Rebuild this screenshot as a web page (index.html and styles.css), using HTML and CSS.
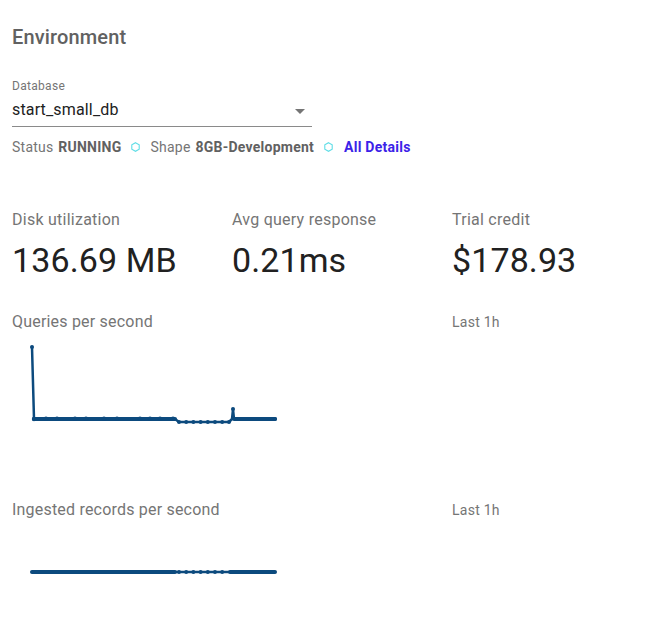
FILE: index.html
```html
<!DOCTYPE html>
<html>
<head>
<meta charset="utf-8">
<link rel="stylesheet" href="styles.css">
</head>
<body>
<main class="page">
  <h1 class="title">Environment</h1>

  <div class="field">
    <div class="field-label">Database</div>
    <div class="select">
      <span class="select-value">start_small_db</span>
      <svg class="select-arrow" width="10" height="5" viewBox="0 0 10 5"><path d="M0 0 L10 0 L5 5 Z" fill="#757575"/></svg>
    </div>
  </div>

  <div class="status">
    <span>Status <b>RUNNING</b></span>
    <svg class="hex" width="9" height="10" viewBox="0 0 9 10"><path d="M4.5 0.7 L8.2 2.85 L8.2 7.15 L4.5 9.3 L0.8 7.15 L0.8 2.85 Z" fill="none" stroke="#5fdde6" stroke-width="1.1"/></svg>
    <span>Shape <b>8GB-Development</b></span>
    <svg class="hex" width="9" height="10" viewBox="0 0 9 10"><path d="M4.5 0.7 L8.2 2.85 L8.2 7.15 L4.5 9.3 L0.8 7.15 L0.8 2.85 Z" fill="none" stroke="#5fdde6" stroke-width="1.1"/></svg>
    <a class="details" href="#">All Details</a>
  </div>

  <section class="metrics">
    <div class="metric">
      <div class="metric-label">Disk utilization</div>
      <div class="metric-value">136.69 MB</div>
    </div>
    <div class="metric">
      <div class="metric-label">Avg query response</div>
      <div class="metric-value">0.21ms</div>
    </div>
    <div class="metric">
      <div class="metric-label">Trial credit</div>
      <div class="metric-value">$178.93</div>
    </div>
  </section>

  <section class="chart">
    <div class="chart-head">
      <div class="chart-title">Queries per second</div>
      <div class="chart-range">Last 1h</div>
    </div>
    <svg class="chart-svg" width="300" height="100" viewBox="12 335 300 100">
      <g fill="none" stroke="#0c4a7e" stroke-linejoin="round" stroke-linecap="round">
        <polyline stroke-width="2.5" points="32,347 34,419 175,419 179,422 229,422 232,419 233,409 234,419 275,419"/>
        <line stroke-width="4" x1="34" y1="419" x2="175" y2="419"/>
        <line stroke-width="4" x1="234" y1="419" x2="275" y2="419"/>
      </g>
      <g fill="#0c4a7e">
        <circle cx="32" cy="347" r="2"/>
        <circle cx="34" cy="419" r="2.2"/>
        <circle cx="46" cy="418.6" r="2.2"/>
        <circle cx="57" cy="418.6" r="2.2"/>
        <circle cx="75" cy="418.6" r="2.2"/>
        <circle cx="86" cy="418.6" r="2.2"/>
        <circle cx="104" cy="418.6" r="2.2"/>
        <circle cx="117" cy="418.6" r="2.2"/>
        <circle cx="140" cy="418.6" r="2.2"/>
        <circle cx="150" cy="418.6" r="2.2"/>
        <circle cx="160" cy="418.6" r="2.2"/>
        <circle cx="173" cy="418.6" r="2.2"/>
        <circle cx="233" cy="409" r="2"/>
        <circle cx="179" cy="422" r="2"/>
        <circle cx="186.2" cy="422" r="2"/>
        <circle cx="193.4" cy="422" r="2"/>
        <circle cx="200.6" cy="422" r="2"/>
        <circle cx="207.8" cy="422" r="2"/>
        <circle cx="215" cy="422" r="2"/>
        <circle cx="222.2" cy="422" r="2"/>
        <circle cx="229" cy="422" r="2"/>
        <circle cx="275" cy="419" r="2"/>
      </g>
    </svg>
  </section>

  <section class="chart chart-second">
    <div class="chart-head">
      <div class="chart-title">Ingested records per second</div>
      <div class="chart-range">Last 1h</div>
    </div>
    <svg class="chart-svg" width="300" height="100" viewBox="12 523 300 100">
      <g fill="none" stroke="#0c4a7e" stroke-linecap="round">
        <line stroke-width="2.5" x1="32" y1="572" x2="275" y2="572"/>
        <line stroke-width="4" x1="32" y1="572" x2="175" y2="572"/>
        <line stroke-width="4" x1="230" y1="572" x2="275" y2="572"/>
      </g>
      <g fill="#0c4a7e">
        <circle cx="179" cy="572" r="2"/>
        <circle cx="186.2" cy="572" r="2"/>
        <circle cx="193.4" cy="572" r="2"/>
        <circle cx="200.6" cy="572" r="2"/>
        <circle cx="207.8" cy="572" r="2"/>
        <circle cx="215" cy="572" r="2"/>
        <circle cx="222.2" cy="572" r="2"/>
      </g>
    </svg>
  </section>
</main>
</body>
</html>
```

FILE: styles.css
```css
* { box-sizing: border-box; }

html, body {
  margin: 0;
  padding: 0;
  background: #ffffff;
}

body {
  font-family: Roboto, "Liberation Sans", Arial, sans-serif;
  color: #212121;
}

.page {
  padding: 25px 12px 0 12px;
  width: 664px;
}

.title {
  margin: 0;
  font-size: 20px;
  line-height: 24px;
  font-weight: 500;
  color: #616161;
  letter-spacing: 0.15px;
}

.field {
  margin-top: 29px;
  width: 300px;
}

.field-label {
  font-size: 12px;
  line-height: 16px;
  color: #757575;
  letter-spacing: 0.3px;
}

.select {
  margin-top: 4px;
  display: flex;
  align-items: center;
  justify-content: space-between;
  padding-bottom: 4px;
  border-bottom: 1px solid #8a8a8a;
}

.select-value {
  font-size: 16px;
  line-height: 24px;
  color: #212121;
  letter-spacing: 0.15px;
}

.select-arrow {
  margin-right: 7px;
  margin-top: 2px;
}

.status {
  margin-top: 10px;
  display: flex;
  align-items: center;
  font-size: 14px;
  line-height: 20px;
  color: #757575;
  letter-spacing: 0.25px;
}

.status b {
  font-weight: 700;
  color: #616161;
  margin-left: 1px;
}

.hex {
  margin: 0 10px 0 10px;
}

.details {
  color: #3b22e8;
  font-weight: 700;
  text-decoration: none;
  margin-left: 1px;
}

.metrics {
  margin-top: 53px;
  display: grid;
  grid-template-columns: 220px 220px 220px;
}

.metric-label {
  font-size: 16px;
  line-height: 20px;
  color: #757575;
  letter-spacing: 0.25px;
}

.metric-value {
  margin-top: 10px;
  font-size: 34px;
  line-height: 40px;
  color: #212121;
  letter-spacing: 0.1px;
}

.chart {
  margin-top: 32px;
}

.chart-second {
  margin-top: 65px;
}

.chart-head {
  display: grid;
  grid-template-columns: 440px 220px;
  align-items: center;
}

.chart-title {
  font-size: 16px;
  line-height: 20px;
  color: #757575;
  letter-spacing: 0.2px;
}

.chart-range {
  font-size: 14px;
  line-height: 20px;
  color: #757575;
  letter-spacing: 0.25px;
}

.chart-svg {
  display: block;
  margin-top: 3px;
}
```
